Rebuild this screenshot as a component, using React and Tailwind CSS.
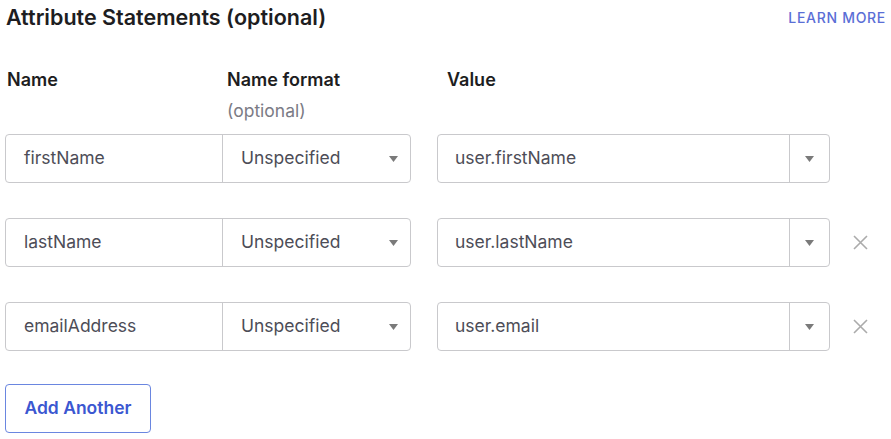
import React from 'react';

const rows = [
  { name: 'firstName', format: 'Unspecified', value: 'user.firstName', removable: false },
  { name: 'lastName', format: 'Unspecified', value: 'user.lastName', removable: true },
  { name: 'emailAddress', format: 'Unspecified', value: 'user.email', removable: true },
];

const Caret = () => (
  <svg width="9" height="6" viewBox="0 0 9 6" className="fill-[#7a7a7a]">
    <path d="M0 0h9L4.5 6z" />
  </svg>
);

const Cross = () => (
  <svg width="15" height="15" viewBox="0 0 15 15" className="stroke-[#ababab]" strokeWidth="1.6" fill="none">
    <path d="M1 1l13 13M14 1L1 14" />
  </svg>
);

const App = () => {
  return (
    <div className="w-[891px] h-[439px] bg-white overflow-hidden font-['Inter',sans-serif] text-[#1d1d21]">
      <div className="flex items-start justify-between pl-[6px] pr-[5px] pt-[5px] h-[29px]">
        <h2 className="text-[21.5px] font-semibold leading-6">Attribute Statements (optional)</h2>
        <a className="text-[14px] font-medium tracking-wider text-[#5a6ed6] leading-5 mt-[3px]">LEARN MORE</a>
      </div>

      <div className="flex mt-[41px] pl-[7px]">
        <div className="w-[220px] text-[18px] font-semibold leading-5">Name</div>
        <div className="w-[220px]">
          <div className="text-[18px] font-semibold leading-5">Name format</div>
          <div className="text-[17.5px] text-[#7b7b85] leading-5 mt-[11px]">(optional)</div>
        </div>
        <div className="text-[18px] font-semibold leading-5">Value</div>
      </div>

      <div className="flex flex-col gap-[35px] mt-[13px] pl-[5px]">
        {rows.map(r => (
          <div key={r.name} className="flex items-center h-[49px]">
            <div className="flex h-full w-[406px] rounded-[4px] border border-[#c9c9cc]">
              <div className="w-[217px] flex items-center pl-[18px] border-r border-[#c9c9cc] text-[17.5px] text-[#4d4d57]">
                {r.name}
              </div>
              <div className="flex-1 flex items-center justify-between pl-[18px] pr-[12px] text-[17.5px] text-[#4d4d57]">
                {r.format}
                <Caret />
              </div>
            </div>
            <div className="flex h-full w-[393px] ml-[26px] rounded-[4px] border border-[#c9c9cc]">
              <div className="flex-1 flex items-center pl-[17px] border-r border-[#c9c9cc] text-[17.5px] text-[#4d4d57]">
                {r.value}
              </div>
              <div className="w-[39px] flex items-center justify-center">
                <Caret />
              </div>
            </div>
            {r.removable && (
              <div className="ml-[23px] flex items-center">
                <Cross />
              </div>
            )}
          </div>
        ))}
      </div>

      <div className="pl-[5px] mt-[33px]">
        <button className="w-[146px] h-[49px] rounded-[4px] border border-[#6a86e0] text-[17.5px] font-semibold text-[#3b57d1] flex items-center justify-center">
          Add Another
        </button>
      </div>
    </div>
  );
};

export default App;
